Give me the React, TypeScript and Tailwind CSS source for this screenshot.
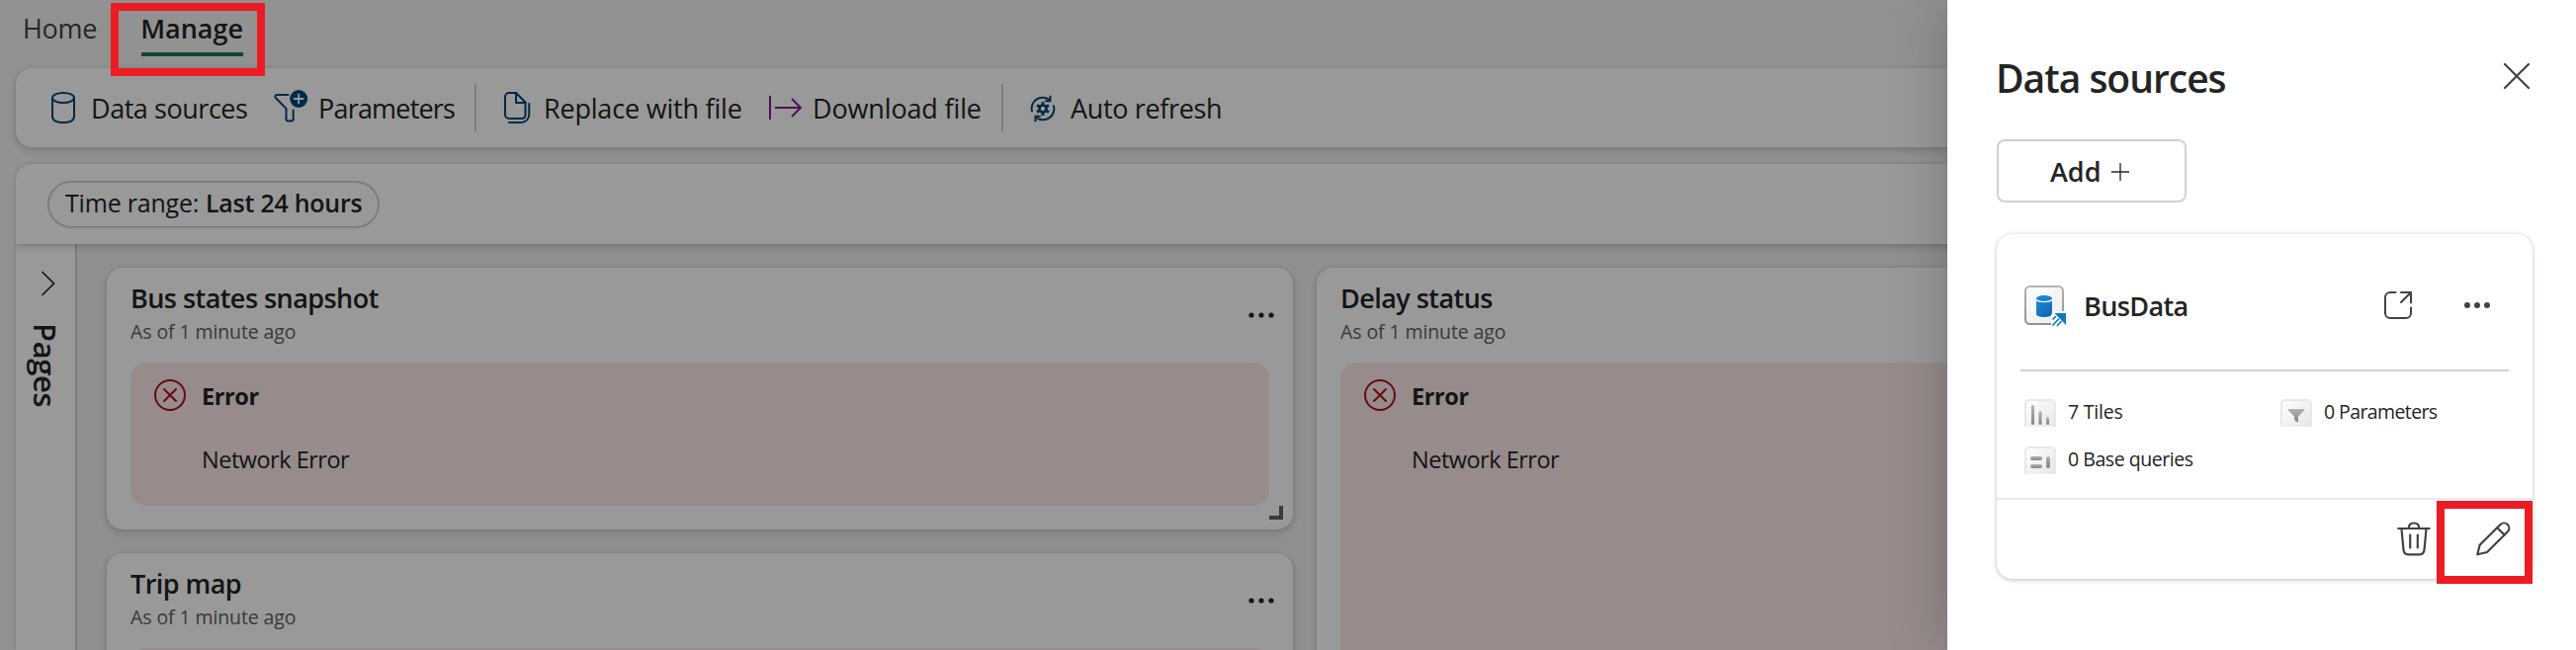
import type { ReactNode } from "react";

function DatabaseIcon() {
  return (
    <svg width="24" height="32" viewBox="0 0 24 32" fill="none" stroke="#004578" strokeWidth="2">
      <ellipse cx="12" cy="6" rx="11" ry="5" />
      <path d="M1 6v18.500C1 28.500 5 31 12 31s11-2.500 11-6.500V6" />
    </svg>
  );
}

function FilterAddIcon() {
  return (
    <svg width="36" height="36" viewBox="0 0 36 36" fill="none" stroke="#004578" strokeWidth="2" strokeLinecap="round">
      <path d="M15.500 7H4C2.200 7 1.800 9 3 10.200L13.500 20.800V31.500c0 1.300.9 2 2.200 2h2.800c1.300 0 2.200-.7 2.200-2V22.500" />
      <circle cx="26.200" cy="11" r="9" fill="#004578" stroke="none" />
      <path d="M26.200 6.500v9M21.700 11h9" stroke="#fff" strokeWidth="1.800" />
    </svg>
  );
}

function DocumentsIcon() {
  return (
    <svg width="28" height="32" viewBox="0 0 28 32" fill="none" stroke="#004578" strokeWidth="2" strokeLinecap="round" strokeLinejoin="round">
      <path d="M5 1h7l9.500 9.500V23.500a3.500 3.500 0 0 1-3.500 3.500H5a4 4 0 0 1-4-4V5a4 4 0 0 1 4-4z" />
      <path d="M12 1.500V11h9.500" />
      <path d="M25.300 12v11a8 8 0 0 1-8 8H5" />
    </svg>
  );
}

function DownloadIcon() {
  return (
    <svg width="34" height="26" viewBox="0 0 34 26" fill="none" stroke="#881798" strokeWidth="2">
      <path d="M1 1v24M6 13h25.500M23 4l9 9-9 9" />
    </svg>
  );
}

function AutoRefreshIcon() {
  return (
    <svg width="28" height="28" viewBox="0 0 28 28" fill="none" stroke="#004578" strokeWidth="2">
      <path d="M3.200 17.500A11.200 11.200 0 0 1 21 5.300" />
      <path d="M21.500.8V6.200H16.200" />
      <g transform="rotate(180 14 14)">
        <path d="M3.200 17.500A11.200 11.200 0 0 1 21 5.300" />
        <path d="M21.500.8V6.200H16.200" />
      </g>
      <circle cx="14" cy="14" r="3.500" strokeWidth="2.600" />
      <path d="M14 7v3M14 18v3M8 10.500l2.500 1.500M17.500 16l2.500 1.500M20 10.500L17.500 12M10.500 16L8 17.500" strokeWidth="2.800" />
    </svg>
  );
}

function ErrorIcon() {
  return (
    <svg width="32" height="32" viewBox="0 0 32 32" fill="none" stroke="#b10e1c" strokeWidth="2" strokeLinecap="round">
      <circle cx="16" cy="16" r="15" />
      <path d="M10 10l12 12M22 10L10 22" />
    </svg>
  );
}

function MoreIcon({ color, r }: { color: string; r: number }) {
  return (
    <svg width="26" height="8" viewBox="0 0 26 8" fill={color}>
      <circle cx="3" cy="4" r={r} />
      <circle cx="13" cy="4" r={r} />
      <circle cx="23" cy="4" r={r} />
    </svg>
  );
}

function OpenIcon() {
  return (
    <svg width="28" height="28" viewBox="0 0 28 28" fill="none" stroke="#424242" strokeWidth="2" strokeLinecap="round" strokeLinejoin="round">
      <path d="M11.500 1H6a5 5 0 0 0-5 5v16a5 5 0 0 0 5 5h16a5 5 0 0 0 5-5v-5.500" />
      <path d="M17 1h10v10.500M26.500 1.500L17 11" />
    </svg>
  );
}

function TrashIcon() {
  return (
    <svg width="34" height="35" viewBox="0 0 34 35" fill="none" stroke="#424242" strokeWidth="2.200" strokeLinecap="round">
      <path d="M1.300 7h31.400M11.800 6.500c0-3.200 2-5 5.200-5s5.200 1.800 5.200 5" />
      <path d="M4.500 7.500l2 21.200c.3 3.200 2 4.700 5 4.700h11c3 0 4.700-1.500 5-4.700l2-21.200" />
      <path d="M13.200 13.500v13M20.800 13.500v13" />
    </svg>
  );
}

function PencilIcon() {
  return (
    <svg width="35" height="35" viewBox="0 0 35 35" fill="none" stroke="#424242" strokeWidth="2.200" strokeLinecap="round" strokeLinejoin="round">
      <path d="M1.300 33.300l2.300-9.500L24.500 3a5.100 5.100 0 0 1 7.300 7.300L11 31z" />
      <path d="M21.300 6.200l7.300 7.300" />
    </svg>
  );
}

function KustoIcon() {
  return (
    <svg width="44" height="44" viewBox="0 0 44 44">
      <defs>
        <linearGradient id="kbox" x1="0" y1="0" x2="1" y2="1">
          <stop offset="0" stopColor="#ffffff" />
          <stop offset="1" stopColor="#ebebeb" />
        </linearGradient>
        <linearGradient id="kborder" x1="0" y1="0" x2="0" y2="1">
          <stop offset="0" stopColor="#b3b3b3" />
          <stop offset="1" stopColor="#919191" />
        </linearGradient>
        <linearGradient id="kblue" x1="0" y1="0" x2="1" y2="1">
          <stop offset="0" stopColor="#1988d9" />
          <stop offset="1" stopColor="#0f66a8" />
        </linearGradient>
      </defs>
      <rect x="1" y="1" width="38" height="38" rx="4.500" fill="url(#kbox)" stroke="url(#kborder)" strokeWidth="2" />
      <ellipse cx="20" cy="13" rx="8" ry="3" fill="#1683d3" />
      <path d="M12 15.500c2 2.300 14 2.300 16 0V29c0 4-16 4-16 0z" fill="url(#kblue)" />
      <path d="M29 26h15v17H27V30z" fill="#fff" />
      <path d="M30.500 28H42v12z" fill="#1278c4" />
      <g stroke="#1278c4" strokeWidth="1.700">
        <path d="M28.500 34.500l3.500-3.500M28.500 40.500l6.500-7M33 41l4.500-5" />
      </g>
    </svg>
  );
}

function StatIcon({ children }: { children: ReactNode }) {
  return (
    <svg width="32" height="28" viewBox="0 0 32 28">
      <defs>
        <linearGradient id="statbg" x1="0" y1="0" x2="1" y2="1">
          <stop offset="0" stopColor="#ffffff" />
          <stop offset="1" stopColor="#e4e4e4" />
        </linearGradient>
        <linearGradient id="statfg" x1="0" y1="0" x2="0" y2="1">
          <stop offset="0" stopColor="#b3b3b3" />
          <stop offset="1" stopColor="#858585" />
        </linearGradient>
      </defs>
      <rect x="1" y="1" width="30" height="32" rx="4" fill="url(#statbg)" stroke="#e8e8e8" strokeWidth="2" />
      <g fill="url(#statfg)">{children}</g>
    </svg>
  );
}

function ErrorMessage() {
  return (
    <>
      <div className="flex h-8 items-center">
        <ErrorIcon />
        <span className="mt-[2px] ml-4 text-[23.5px] leading-8 font-bold tracking-[-0.4px] text-[#242424]">Error</span>
      </div>
      <div className="mt-[33px] ml-12 text-[23.5px] leading-8 tracking-[-0.5px] text-[#242424]">Network Error</div>
    </>
  );
}

function Tile({ title, size, box, children }: { title: string; size: string; box: string; children?: ReactNode }) {
  return (
    <section className={`relative shrink-0 rounded-2xl bg-white px-6 pt-[13px] shadow-[0_0_4px_rgba(0,0,0,0.12),0_4px_8px_rgba(0,0,0,0.14)] ${size}`}>
      <div className="flex h-[83px] justify-between">
        <div>
          <h2 className="text-[27px] leading-9 font-semibold tracking-[-0.55px] text-[#242424]">{title}</h2>
          <p className="mt-[3px] text-[19.5px] leading-[26px] tracking-[-0.1px] text-[#616161]">As of 1 minute ago</p>
        </div>
        <div className="-mr-[5px] pt-[31px]">
          <MoreIcon color="#242424" r={2.6} />
        </div>
      </div>
      <div className={`rounded-2xl bg-[#fce8e8] px-6 pt-[17px] ${box}`}>{children}</div>
      <span className="absolute right-[10px] bottom-[10px] size-[14px] border-r-4 border-b-4 border-[#616161]" />
    </section>
  );
}

function Drawer() {
  return (
    <aside className="absolute inset-y-0 right-0 flex w-[636px] flex-col items-start bg-white pr-[44px] pl-[50px] shadow-[0_0_56px_rgba(0,0,0,0.22)]">
      <header className="flex w-full items-start justify-between pt-[53px]">
        <h1 className="-ml-px text-[39px] leading-[52px] font-semibold tracking-[-1px] text-[#242424]">Data sources</h1>
        <svg className="mt-[10px] mr-[2px]" width="28" height="28" viewBox="0 0 28 28" stroke="#424242" strokeWidth="2.200" strokeLinecap="round">
          <path d="M2 2l24 24M26 2L2 26" />
        </svg>
      </header>
      <button className="mt-9 flex h-16 w-48 items-center rounded-lg border-2 border-[#d1d1d1] pl-[52px] text-[27px] font-semibold text-[#242424]">
        <span className="mt-[2px]">Add</span>
        <svg className="mt-[2px] ml-[10px]" width="20" height="20" viewBox="0 0 20 20" stroke="#242424" strokeWidth="1.300">
          <path d="M10 1v18M1 10h18" />
        </svg>
      </button>
      <section className="mt-8 h-[349px] w-full rounded-2xl bg-white shadow-[0_0_4px_rgba(0,0,0,0.14),0_2px_5px_rgba(0,0,0,0.14)]">
        <div className="flex h-[137px] items-start px-7 pt-[52px]">
          <KustoIcon />
          <span className="mt-[3px] ml-4 text-[27px] leading-9 font-semibold tracking-[-0.6px] text-[#242424]">BusData</span>
          <span className="mt-[6px] ml-auto"><OpenIcon /></span>
          <span className="mt-4 mr-[15px] ml-[53px]"><MoreIcon color="#424242" r={3} /></span>
        </div>
        <div className="mx-6 h-[2px] bg-[#d1d1d1]" />
        <div className="grid h-[128px] grid-cols-[259px_1fr] content-start gap-y-5 pt-7 pl-7 text-[19.5px] leading-[26px] text-[#242424]">
          <div className="flex h-7 items-start">
            <StatIcon>
              <rect x="7" y="6" width="3" height="20" rx="1.500" />
              <rect x="14.500" y="12" width="3" height="14" rx="1.500" />
              <rect x="22" y="18" width="3" height="8" rx="1.500" />
            </StatIcon>
            <span className="ml-3 tracking-[-0.2px]">7 Tiles</span>
          </div>
          <div className="flex h-7 items-start">
            <StatIcon>
              <path d="M8.500 10h15c.8 0 1 .8.500 1.500L18 17.500v4.500c0 1.500-1.500 1.500-2.200.8L14 21v-3.500L8 11.500c-.5-.7-.3-1.500.5-1.500z" />
            </StatIcon>
            <span className="ml-3 tracking-[-0.6px]">0 Parameters</span>
          </div>
          <div className="flex h-7 items-start">
            <StatIcon>
              <rect x="6" y="10" width="12" height="4" rx="2" />
              <rect x="6" y="18" width="12" height="4" rx="2" />
              <rect x="22" y="10" width="4" height="12" rx="2" />
            </StatIcon>
            <span className="ml-3 tracking-[-0.45px]">0 Base queries</span>
          </div>
        </div>
        <div className="h-[2px] bg-[#ebebeb]" />
        <div className="relative flex justify-end gap-[46px] pt-[22px] pr-[22px]">
          <TrashIcon />
          <PencilIcon />
          <span className="absolute top-[1px] right-0 h-[84px] w-[97px] border-8 border-[#ed1c24]" />
        </div>
      </section>
    </aside>
  );
}

export default function App() {
  return (
    <div className="relative h-[658px] w-[2606px] overflow-hidden bg-[#f3f3f3] font-['Open_Sans',sans-serif]">
      <div className="flex h-full flex-col pl-4">
        <nav className="flex h-[69px] shrink-0 items-start pt-[11px] text-[27px] leading-9">
          <span className="ml-[7px] tracking-[-0.3px] text-[#424242]">Home</span>
          <span className="ml-[43px] w-[106px] text-center font-semibold text-[#242424]">
            Manage
            <span className="mx-auto mt-[6px] block h-1 w-[103px] bg-[#117865]" />
          </span>
        </nav>

        <div className="flex h-20 shrink-0 items-center rounded-l-2xl bg-white pl-9 text-[27px] text-[#242424] shadow-[0_0_4px_rgba(0,0,0,0.12),0_4px_8px_rgba(0,0,0,0.14)]">
          <DatabaseIcon />
          <span className="mt-[2px] ml-4 w-[184px] tracking-[-0.45px]">Data sources</span>
          <span className="-mt-1"><FilterAddIcon /></span>
          <span className="mt-[2px] ml-[10px] w-[158px] tracking-[-0.8px]">Parameters</span>
          <span className="h-12 w-[2px] bg-[#d1d1d1]" />
          <span className="ml-7"><DocumentsIcon /></span>
          <span className="mt-[2px] ml-3 w-[228px] tracking-[-0.2px]">Replace with file</span>
          <DownloadIcon />
          <span className="mt-[2px] ml-[10px] w-[191px] tracking-[-0.15px]">Download file</span>
          <span className="h-12 w-[2px] bg-[#d1d1d1]" />
          <span className="mt-[2px] ml-[26px]"><AutoRefreshIcon /></span>
          <span className="mt-[2px] ml-[14px] tracking-[-0.35px]">Auto refresh</span>
        </div>

        <div className="mt-[17px] flex min-h-0 flex-1 flex-col overflow-hidden rounded-tl-2xl bg-white shadow-[0_0_4px_rgba(0,0,0,0.18)]">
          <div className="relative flex h-[81px] shrink-0 items-center bg-white pl-8 shadow-[0_0_4px_rgba(0,0,0,0.12),0_4px_8px_rgba(0,0,0,0.14)]">
            <div className="flex h-12 w-[336px] items-center rounded-full border-2 border-[#d1d1d1] pb-[2px] pl-4 text-[25px] whitespace-nowrap text-[#242424]">
              <span className="w-[142px] tracking-[-0.2px]">Time range:</span>
              <span className="font-semibold tracking-[-0.25px]">Last 24 hours</span>
            </div>
          </div>
          <div className="flex min-h-0 flex-1">
            <div className="flex w-[62px] shrink-0 flex-col items-center border-r-2 border-[#d1d1d1] bg-white pt-[27px]">
              <svg className="ml-1" width="15" height="26" viewBox="0 0 15 26" fill="none" stroke="#242424" strokeWidth="1.700">
                <path d="M1.500 1L13.500 13l-12 12" />
              </svg>
              <span className="mt-[27px] text-[31px] leading-[42px] font-semibold tracking-[-0.4px] text-[#242424] [writing-mode:vertical-rl]">Pages</span>
            </div>
            <div className="flex flex-1 gap-6 bg-[#f0f0f0] pt-6 pl-[30px]">
              <div className="flex w-[1200px] shrink-0 flex-col gap-6">
                <Tile title="Bus states snapshot" size="h-[265px]" box="h-[145px]">
                  <ErrorMessage />
                </Tile>
                <Tile title="Trip map" size="h-[265px]" box="h-[145px]" />
              </div>
              <Tile title="Delay status" size="h-[560px] w-[1200px]" box="h-[440px]">
                <ErrorMessage />
              </Tile>
            </div>
          </div>
        </div>
      </div>

      <div className="absolute inset-0 bg-black/40" />
      <span className="absolute top-[3px] left-[112px] h-[74px] w-[156px] border-8 border-[#ed1c24]" />
      <Drawer />
    </div>
  );
}
